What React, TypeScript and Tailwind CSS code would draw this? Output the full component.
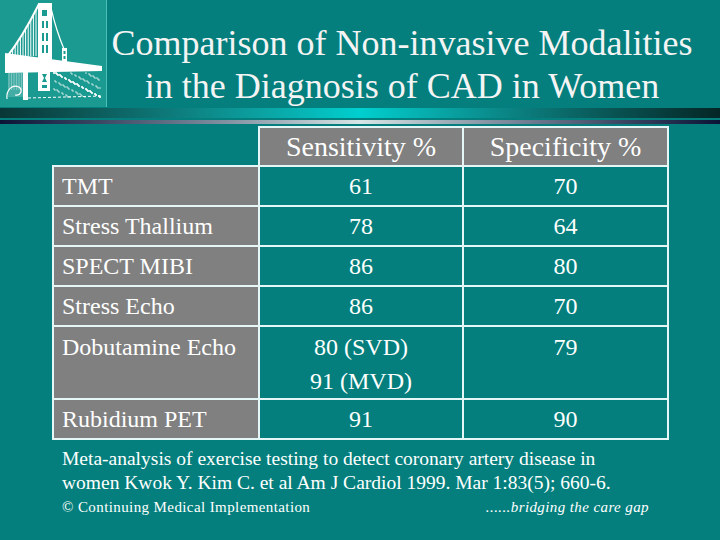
import React from 'react';

type Row = { name: string; sens: string[]; spec: string; tall?: boolean };

const rows: Row[] = [
  { name: 'TMT', sens: ['61'], spec: '70' },
  { name: 'Stress Thallium', sens: ['78'], spec: '64' },
  { name: 'SPECT MIBI', sens: ['86'], spec: '80' },
  { name: 'Stress Echo', sens: ['86'], spec: '70' },
  { name: 'Dobutamine Echo', sens: ['80 (SVD)', '91 (MVD)'], spec: '79', tall: true },
  { name: 'Rubidium PET', sens: ['91'], spec: '90' },
];

// little pseudo random speckle for the ground under the bridge
const dots = Array.from({ length: 90 }, (_, i) => {
  const x = 54 + ((i * 37) % 47);
  const y = 73 + ((i * 53) % 25);
  return { x, y, r: i % 3 === 0 ? 1.1 : 0.7 };
});

// y of the left main cable at x (quadratic from (7,57) via (22,38) to (38,5))
function cableY(x: number) {
  const t = (x - 7) / 31;
  return (1 - t) * (1 - t) * 57 + 2 * (1 - t) * t * 38 + t * t * 5;
}

function BridgeLogo() {
  const bg = '#1a9a90';
  return (
    <svg width="107" height="107" viewBox="0 0 107 107">
      {/* left cable with hangers */}
      {Array.from({ length: 11 }, (_, i) => {
        const x = 10 + i * 2.6;
        return <line key={i} x1={x} y1={cableY(x)} x2={x} y2={56} stroke="#fff" strokeWidth="1" />;
      })}
      <path d="M6 58 Q 22 38 39 4" fill="none" stroke="#fff" strokeWidth="2" />
      {/* right cable */}
      <path d="M51 8 Q 56 30 64 49" fill="none" stroke="#fff" strokeWidth="1.2" />
      {/* main tower */}
      <rect x="38" y="3" width="14" height="62" fill="#fff" />
      <rect x="42" y="10" width="5" height="6" fill={bg} />
      <rect x="42" y="21" width="2" height="7" fill={bg} />
      <rect x="46" y="21" width="2" height="7" fill={bg} />
      <rect x="42" y="33" width="2" height="8" fill={bg} />
      <rect x="46" y="33" width="2" height="8" fill={bg} />
      <rect x="42" y="45" width="2" height="8" fill={bg} />
      <rect x="46" y="45" width="2" height="8" fill={bg} />
      {/* small tower */}
      <rect x="62" y="48" width="5" height="16" fill="#fff" />
      <rect x="63.5" y="51" width="2" height="3" fill={bg} />
      <rect x="63.5" y="56" width="2" height="3" fill={bg} />
      {/* deck */}
      <polygon points="5,53 102,66 102,71 5,73" fill="#fff" />
      {/* light hatch under deck, left */}
      <rect x="8" y="73" width="17" height="24" fill="#fff" opacity="0.18" />
      {Array.from({ length: 7 }, (_, i) => (
        <line key={i} x1={9 + i * 2.5} y1={73} x2={9 + i * 2.5} y2={90} stroke="#fff" strokeWidth="0.6" opacity="0.5" />
      ))}
      {/* pier under tower */}
      <rect x="38" y="71" width="12" height="20" fill="#fff" />
      <polygon points="42,74 47,74 45,78 47,82 42,82 44,78" fill={bg} />
      <rect x="42" y="85" width="5" height="3" fill={bg} />
      {/* post */}
      <rect x="23" y="70" width="5" height="30" fill="#fff" />
      {/* swirl bottom left */}
      <path d="M7 99 C6 89 13 84 19 87 C23 90 21 96 15 95" fill="none" stroke="#fff" strokeWidth="1.2" />
      {/* ground speckle */}
      {dots.map((d, i) => (
        <circle key={i} cx={d.x} cy={d.y} r={d.r} fill="#fff" />
      ))}
      <line x1="28" y1="98" x2="102" y2="96" stroke="#fff" strokeWidth="1" strokeDasharray="3 2" />
    </svg>
  );
}

export default function App() {
  const cell = 'border-2 border-[#e4f6f6]';

  return (
    <div className="w-[720px] h-[540px] overflow-hidden bg-[#047f7d] text-white font-['Liberation_Serif',serif]">
      {/* header */}
      <div className="flex h-[107px]">
        <div className="w-[107px] h-[107px] bg-[#1a9a90] border-r border-[#4cc0b6]">
          <BridgeLogo />
        </div>
        <div className="flex-1 pr-[23px] pt-[22px] text-center text-[36px] leading-[43px] text-[#f4f4f4]">
          <div>Comparison of Non-invasive Modalities</div>
          <div>in the Diagnosis of CAD in Women</div>
        </div>
      </div>

      {/* bars */}
      <div className="mt-[1px] h-[10px] bg-gradient-to-r from-[#093636] via-[#00cfcf] to-[#052626]" />
      <div className="mt-[2px] h-[4px] bg-gradient-to-r from-[#0c1436] via-[#d6e6e6] to-[#0c1436]" />

      {/* table */}
      <table className="mt-[2px] ml-[52px] w-[615px] table-fixed border-collapse font-['Liberation_Serif',serif]">
        <colgroup>
          <col className="w-[206px]" />
          <col className="w-[204px]" />
          <col className="w-[205px]" />
        </colgroup>
        <thead>
          <tr className="h-[39px]">
            <th />
            <th className={`${cell} bg-[#808080] text-[28px] leading-[34px] font-normal`}>Sensitivity %</th>
            <th className={`${cell} bg-[#808080] text-[28px] leading-[34px] font-normal`}>Specificity %</th>
          </tr>
        </thead>
        <tbody className="text-[24px] leading-[34px]">
          {rows.map((r) => (
            <tr key={r.name} className={r.tall ? 'h-[70px]' : 'h-[40px]'}>
              <td className={`${cell} bg-[#808080] pl-[8px] ${r.tall ? 'align-top pt-[3px]' : 'align-middle'}`}>
                {r.name}
              </td>
              <td className={`${cell} text-center ${r.tall ? 'align-top pt-[3px]' : 'align-middle'}`}>
                {r.sens.map((s) => (
                  <div key={s}>{s}</div>
                ))}
              </td>
              <td className={`${cell} text-center ${r.tall ? 'align-top pt-[3px]' : 'align-middle'}`}>
                {r.spec}
              </td>
            </tr>
          ))}
        </tbody>
      </table>

      {/* reference */}
      <div className="mt-[7px] pl-[62px] text-[19.5px] leading-[24px]">
        Meta-analysis of exercise testing to detect coronary artery disease in
        <br />
        women Kwok Y. Kim C. et al Am J Cardiol 1999. Mar 1:83(5); 660-6.
      </div>

      {/* footer */}
      <div className="flex justify-between pl-[62px] pr-[71px] text-[15px] leading-[24px] tracking-[0.4px]">
        <span>© Continuing Medical Implementation</span>
        <span className="italic">......bridging the care gap</span>
      </div>
    </div>
  );
}
